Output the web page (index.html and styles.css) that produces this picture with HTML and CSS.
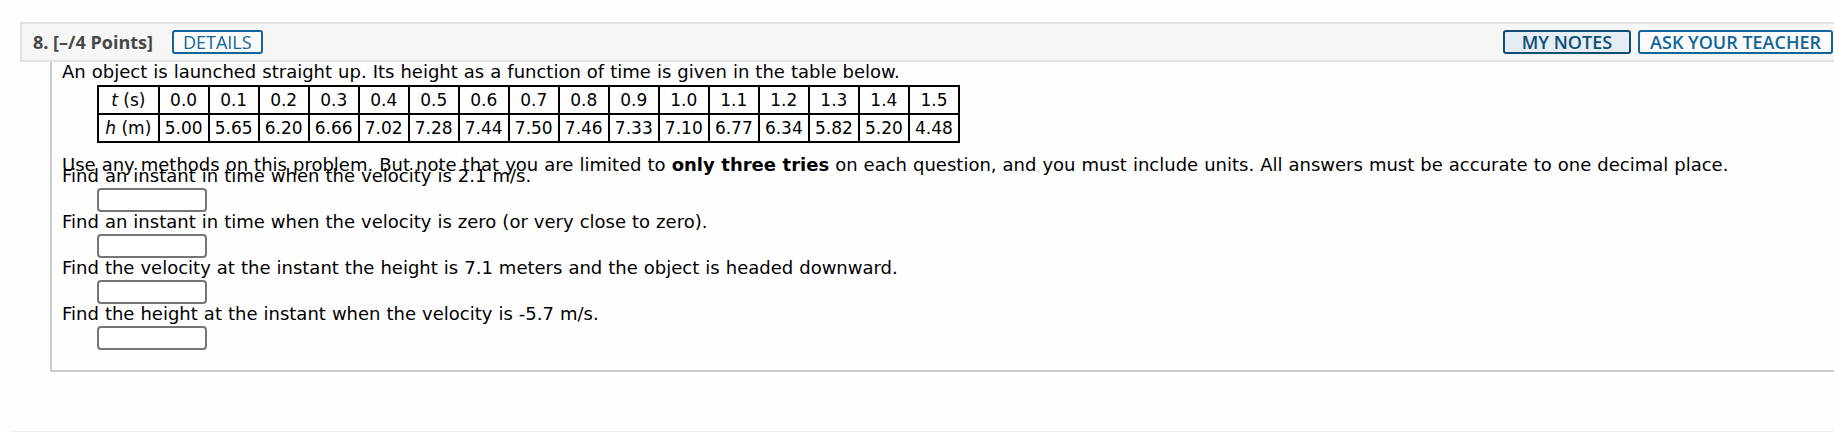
FILE: index.html
```html
<!DOCTYPE html>
<html lang="en">
<head>
<meta charset="utf-8">
<title>Question 8</title>
<link rel="stylesheet" href="styles.css">
</head>
<body>
<div class="question">
  <div class="qhead">
    <span class="qlabel">8. [–/4 Points]</span>
    <span class="btn btn-details">DETAILS</span>
    <div class="qactions">
      <span class="btn btn-notes">MY NOTES</span>
      <span class="btn btn-ask">ASK YOUR TEACHER</span>
    </div>
  </div>
  <div class="qbody">
    <p class="line">An object is launched straight up. Its height as a function of time is given in the table below.</p>
    <table class="data">
      <tr><td><i>t</i> (s)</td><td>0.0</td><td>0.1</td><td>0.2</td><td>0.3</td><td>0.4</td><td>0.5</td><td>0.6</td><td>0.7</td><td>0.8</td><td>0.9</td><td>1.0</td><td>1.1</td><td>1.2</td><td>1.3</td><td>1.4</td><td>1.5</td></tr>
      <tr><td><i>h</i> (m)</td><td>5.00</td><td>5.65</td><td>6.20</td><td>6.66</td><td>7.02</td><td>7.28</td><td>7.44</td><td>7.50</td><td>7.46</td><td>7.33</td><td>7.10</td><td>6.77</td><td>6.34</td><td>5.82</td><td>5.20</td><td>4.48</td></tr>
    </table>
    <p class="line note">Use any methods on this problem. But note that you are limited to <b>only three tries</b> on each question, and you must include units. All answers must be accurate to one decimal place.</p>
    <div class="part first">
      <p class="line">Find an instant in time when the velocity is 2.1 m/s.</p>
      <div class="answer"></div>
    </div>
    <div class="part">
      <p class="line">Find an instant in time when the velocity is zero (or very close to zero).</p>
      <div class="answer"></div>
    </div>
    <div class="part">
      <p class="line">Find the velocity at the instant the height is 7.1 meters and the object is headed downward.</p>
      <div class="answer"></div>
    </div>
    <div class="part">
      <p class="line">Find the height at the instant when the velocity is -5.7 m/s.</p>
      <div class="answer"></div>
    </div>
  </div>
</div>
<div class="next"></div>
</body>
</html>
```
FILE: styles.css
```css
html, body {
  margin: 0;
  padding: 0;
  background: #fefefe;
  overflow: hidden;
}
body {
  font-family: "DejaVu Sans", Verdana, sans-serif;
  font-size: 18px;
  color: #000;
}
.question {
  margin: 22px 0 0 20px;
}
.qhead {
  display: flex;
  align-items: center;
  height: 36px;
  border: 2px solid #e2e2e2;
  border-right: none;
  background: #f6f6f6;
  padding-left: 11px;
  font-family: "Open Sans", "Noto Sans", sans-serif;
}
.qlabel {
  font-weight: 700;
  font-size: 18px;
  color: #474747;
}
.btn {
  display: inline-flex;
  align-items: center;
  box-sizing: border-box;
  height: 24px;
  border: 2px solid #10659a;
  border-radius: 3px;
  padding: 0 10px;
  font-size: 18px;
  font-weight: 600;
  color: #10659a;
  background: #fbfbfb;
  line-height: 20px;
}
.btn-details {
  margin-left: 19px;
  font-weight: 500;
  padding: 0 9px;
}
.qactions {
  margin-left: auto;
  margin-right: 1px;
  display: flex;
  gap: 7px;
}
.btn-notes {
  background: #e5edf4;
  border-color: #0e4d74;
  color: #0e4d74;
  padding: 0 17px;
}
.qbody {
  margin-left: 30px;
  border-left: 2px solid #cccccc;
  border-bottom: 2px solid #cccccc;
  padding: 0 0 20px 10px;
  word-spacing: 0.3px;
}
.line {
  margin: 0;
  line-height: 20px;
}
.data {
  width: 863px;
  margin: 3px 0 0 35px;
  border-collapse: collapse;
  border: 2px solid #000;
  word-spacing: 0;
  font-size: 17px;
}
.data td {
  border: 2px solid #000;
  padding: 3px 4px;
  line-height: 20px;
  text-align: center;
  white-space: nowrap;
}
.data td:first-child {
  padding: 3px 5px;
}
.note {
  margin-top: 12px;
}
.part.first {
  margin-top: -9px;
}
.answer {
  box-sizing: border-box;
  width: 110px;
  height: 24px;
  margin: 2px 0 0 35px;
  border: 2px solid #757575;
  border-radius: 4px;
  background: #fff;
}
.next {
  margin: 59px 0 0 10px;
  border-top: 1px solid #efefef;
}
```
